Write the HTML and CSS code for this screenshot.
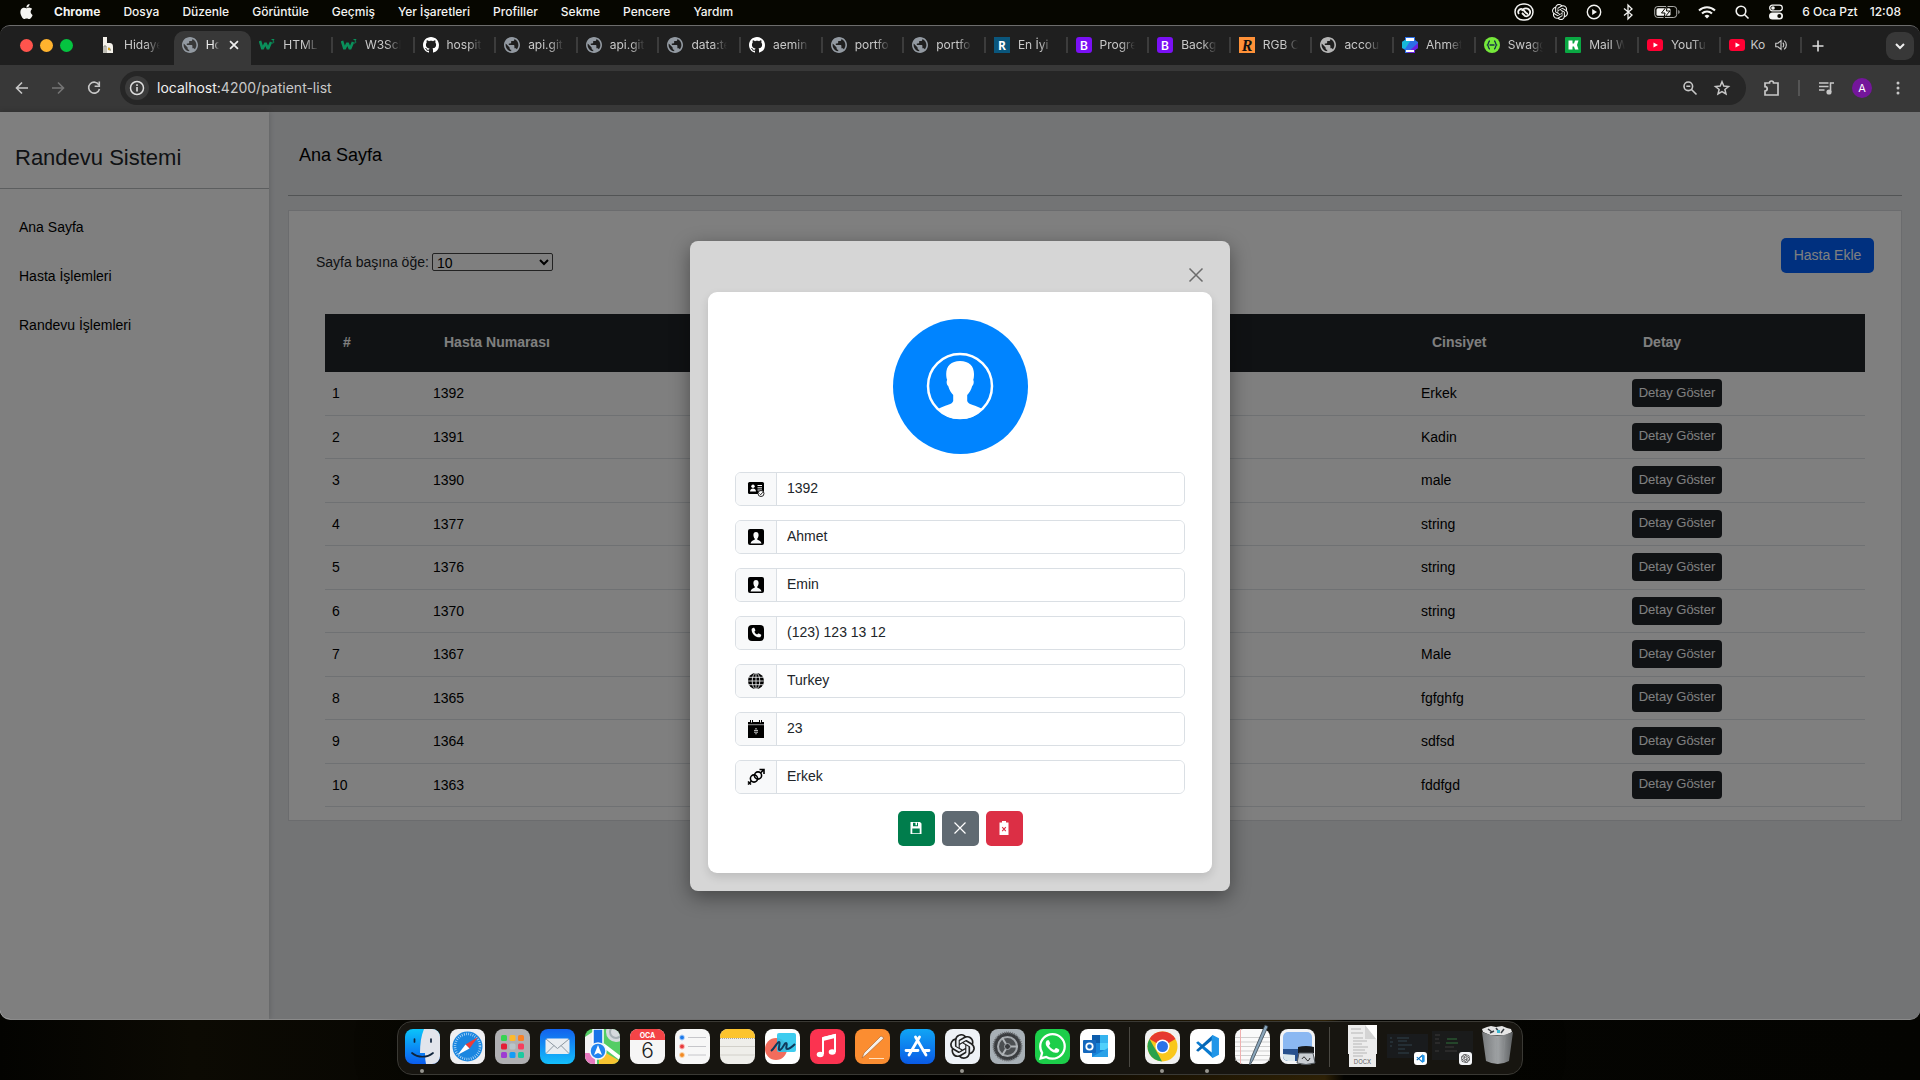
FILE: index.html
```html
<!DOCTYPE html>
<html lang="tr">
<head>
<meta charset="utf-8">
<title>Hasta Listesi</title>
<link rel="stylesheet" href="styles.css">
</head>
<body>
<svg class="sprite" aria-hidden="true">
  <symbol id="globe" viewBox="2 2 20 20"><path fill="currentColor" d="M12 2C6.48 2 2 6.48 2 12s4.48 10 10 10 10-4.48 10-10S17.52 2 12 2zm-1 17.93c-3.95-.49-7-3.85-7-7.93 0-.62.08-1.21.21-1.79L9 15v1c0 1.1.9 2 2 2v1.93zm6.9-2.54c-.26-.81-1-1.39-1.9-1.39h-1v-3c0-.55-.45-1-1-1H8v-2h2c.55 0 1-.45 1-1V7h2c1.1 0 2-.9 2-2v-.41c2.93 1.19 5 4.06 5 7.41 0 2.08-.8 3.97-2.1 5.39z"/></symbol>
  <symbol id="github" viewBox="0 0 16 16"><path fill="#fff" d="M8 0C3.58 0 0 3.58 0 8c0 3.54 2.29 6.53 5.47 7.59.4.07.55-.17.55-.38 0-.19-.01-.82-.01-1.49-2.01.37-2.53-.49-2.69-.94-.09-.23-.48-.94-.82-1.13-.28-.15-.68-.52-.01-.53.63-.01 1.08.58 1.23.82.72 1.21 1.87.87 2.33.66.07-.52.28-.87.51-1.07-1.78-.2-3.64-.89-3.64-3.95 0-.87.31-1.59.82-2.15-.08-.2-.36-1.02.08-2.12 0 0 .67-.21 2.2.82.64-.18 1.32-.27 2-.27s1.36.09 2 .27c1.53-1.04 2.2-.82 2.2-.82.44 1.1.16 1.92.08 2.12.51.56.82 1.27.82 2.15 0 3.07-1.87 3.75-3.65 3.95.29.25.54.73.54 1.48 0 1.07-.01 1.93-.01 2.2 0 .21.15.46.55.38A8.01 8.01 0 0 0 16 8c0-4.42-3.58-8-8-8"/></symbol>
  <symbol id="w3" viewBox="0 0 16 16"><path d="M1 4l2.500 8L6.500 6l2.500 6L12 5" fill="none" stroke="#0a8f5a" stroke-width="2.600" stroke-linejoin="bevel"/><path d="M12.500 2.500H15l-1.200 1.600c1.600 0 1.600 2.200-.8 1.900" fill="none" stroke="#0a8f5a"/></symbol>
  <symbol id="boot" viewBox="0 0 16 16"><rect width="16" height="16" rx="3" fill="#7a10f5"/><text x="8" y="12.500" font-size="12" font-weight="600" font-family="Inter, sans-serif" text-anchor="middle" fill="#fff">B</text></symbol>
  <symbol id="youtube" viewBox="0 0 16 16"><rect y="2" width="16" height="12" rx="3" fill="#ff0033"/><path d="M6.500 5.500v5L11 8z" fill="#fff"/></symbol>
  <symbol id="openai" viewBox="0 0 24 24"><path fill="currentColor" d="M22.2819 9.8211a5.9847 5.9847 0 0 0-.5157-4.9108 6.0462 6.0462 0 0 0-6.5098-2.9A6.0651 6.0651 0 0 0 4.9807 4.1818a5.9847 5.9847 0 0 0-3.9977 2.9 6.0462 6.0462 0 0 0 .7427 7.0966 5.98 5.98 0 0 0 .511 4.9107 6.051 6.051 0 0 0 6.5146 2.9001A5.9847 5.9847 0 0 0 13.2599 24a6.0557 6.0557 0 0 0 5.7718-4.2058 5.9894 5.9894 0 0 0 3.9977-2.9001 6.0557 6.0557 0 0 0-.7475-7.0729zm-9.022 12.6081a4.4755 4.4755 0 0 1-2.8764-1.0408l.1419-.0804 4.7783-2.7582a.7948.7948 0 0 0 .3927-.6813v-6.7369l2.02 1.1686a.071.071 0 0 1 .038.052v5.5826a4.504 4.504 0 0 1-4.4945 4.4944zm-9.6607-4.1254a4.4708 4.4708 0 0 1-.5346-3.0137l.142.0852 4.783 2.7582a.7712.7712 0 0 0 .7806 0l5.8428-3.3685v2.3324a.0804.0804 0 0 1-.0332.0615L9.74 19.9502a4.4992 4.4992 0 0 1-6.1408-1.6464zM2.3408 7.8956a4.485 4.485 0 0 1 2.3655-1.9728V11.6a.7664.7664 0 0 0 .3879.6765l5.8144 3.3543-2.0201 1.1685a.0757.0757 0 0 1-.071 0l-4.8303-2.7865A4.504 4.504 0 0 1 2.3408 7.872zm16.5963 3.8558L13.1038 8.364 15.1192 7.2a.0757.0757 0 0 1 .071 0l4.8303 2.7913a4.4944 4.4944 0 0 1-.6765 8.1042v-5.6772a.79.79 0 0 0-.407-.667zm2.0107-3.0231l-.142-.0852-4.7735-2.7818a.7759.7759 0 0 0-.7854 0L9.409 9.2297V6.8974a.0662.0662 0 0 1 .0284-.0615l4.8303-2.7866a4.4992 4.4992 0 0 1 6.6802 4.66zM8.3065 12.863l-2.02-1.1638a.0804.0804 0 0 1-.038-.0567V6.0742a4.4992 4.4992 0 0 1 7.3757-3.4537l-.142.0805L8.704 5.459a.7948.7948 0 0 0-.3927.6813zm1.0976-2.3654l2.602-1.4998 2.6069 1.4998v2.9994l-2.5974 1.4997-2.6067-1.4997Z"/></symbol>
  <symbol id="vscode" viewBox="0 0 24 24"><path fill="#0a7bd0" d="M1 8.500L3 7l14.500 12L17 23z"/><path fill="#0667b5" d="M1 15.500L3 17 17.500 5 17 1z"/><path fill="#2196e8" d="M17 1l6 3v16l-6 3-1-1V2z"/></symbol>
  <symbol id="person-box" viewBox="0 0 16 16"><rect width="16" height="16" rx="2" fill="#000"/><path fill="#f8f9fa" d="M8 3c1.700 0 2.600 1.200 2.600 2.900 0 1.500-.6 2.900-1.300 3.600v1.300c2 .6 3.700 1.400 4.200 3.700h-11c.5-2.300 2.200-3.100 4.200-3.700V9.500C6 8.800 5.400 7.400 5.400 5.900 5.400 4.200 6.300 3 8 3z"/></symbol>
</svg>

<header class="menubar">
  <button class="menu-apple" aria-label="Apple"><svg width="15" height="15" viewBox="0 0 16 16"><path fill="currentColor" d="M11.182.008C11.148-.03 9.923.023 8.857 1.18c-1.066 1.156-.902 2.482-.878 2.516s1.520.087 2.475-1.258.762-2.391.728-2.430m3.314 11.733c-.048-.096-2.325-1.234-2.113-3.422s1.675-2.789 1.698-2.854-.597-.79-1.254-1.157a3.700 3.700 0 0 0-1.563-.434c-.108-.003-.483-.095-1.254.116-.508.139-1.653.589-1.968.607-.316.018-1.256-.522-2.267-.665-.647-.125-1.333.131-1.824.328-.49.196-1.422.754-2.074 2.237-.652 1.482-.311 3.830-.067 4.560s.625 1.924 1.273 2.796c.576.984 1.340 1.667 1.659 1.899s1.219.386 1.843.067c.502-.308 1.408-.485 1.766-.472.357.013 1.061.154 1.782.539.571.197 1.111.115 1.652-.105.541-.221 1.324-1.059 2.238-2.758q.520-1.185.473-1.282"/></svg></button>
  <nav class="menus">
    <button class="app-name">Chrome</button><button>Dosya</button><button>Düzenle</button><button>Görüntüle</button><button>Geçmiş</button><button>Yer İşaretleri</button><button>Profiller</button><button>Sekme</button><button>Pencere</button><button>Yardım</button>
  </nav>
  <div class="status">
    <svg width="20" height="18" viewBox="0 0 20 18" fill="none" stroke="currentColor"><rect x="1" y="1" width="18" height="16" rx="8" stroke-width="1.500"/><path d="M5 11a3 3 0 0 1 2-5c3-1 4 5 7 5M8 8c1-3 6-4 8 0 1 4-3 6-5 5L8 10" stroke-width="1.800"/></svg>
    <svg width="16" height="16"><use href="#openai"/></svg>
    <svg width="16" height="16" viewBox="0 0 16 16"><circle cx="8" cy="8" r="6.700" fill="none" stroke="currentColor" stroke-width="1.400"/><path d="M6.200 5v6L11 8z" fill="currentColor"/></svg>
    <svg width="16" height="16" viewBox="0 0 16 16" fill="none" stroke="currentColor" stroke-width="1.300"><path d="M4 4.500l8 6.500-4 4V1l4 4-8 6.500"/></svg>
    <svg width="26" height="14" viewBox="0 0 26 14"><rect x=".7" y="1.500" width="22" height="11" rx="3" fill="none" stroke="currentColor" opacity=".7"/><path d="M24.500 5v4c1.300-.5 1.300-3.500 0-4" fill="currentColor"/><rect x="2.500" y="3.200" width="14" height="7.600" rx="1.500" fill="currentColor"/><path d="M13 1L7.500 8H11l-1 5 6-7h-3.500z" fill="currentColor" stroke="#060600"/></svg>
    <svg width="18" height="14" viewBox="0 0 18 14" fill="none" stroke="currentColor" stroke-width="2"><path d="M1 5.500a11.500 11.500 0 0 1 16 0M4 8.500a7 7 0 0 1 10 0"/><path d="M6.500 11a3.500 3.500 0 0 1 5 0L9 13.500z" fill="currentColor" stroke="none"/></svg>
    <svg width="16" height="16" viewBox="0 0 16 16" fill="none" stroke="currentColor" stroke-width="1.600"><circle cx="7" cy="7" r="4.800"/><path d="M10.500 10.500l4 4"/></svg>
    <svg width="16" height="16" viewBox="0 0 16 16"><rect x="1.700" y="1.200" width="12.600" height="5.600" rx="2.800" fill="none" stroke="currentColor" stroke-width="1.300"/><circle cx="5" cy="4" r="1.800" fill="currentColor"/><rect x="1" y="8.500" width="14" height="7" rx="3.500" fill="currentColor"/><circle cx="11.300" cy="12" r="2" fill="#060600"/></svg>
    <span class="clock"><span>6 Oca Pzt</span><time>12:08</time></span>
  </div>
</header>

<div class="window">
  <div class="tabstrip">
    <div class="lights"><i class="light red"></i><i class="light amber"></i><i class="light green"></i></div>
    <div class="tabs">
      <button class="tab plain"><svg viewBox="0 0 16 16"><path d="M3 0h4v6h2c3 0 4 1 4 4v6H3z" fill="#f4f1ea"/><path d="M4 16V9h2v7M8 11c2 0 3 1 2 3" fill="none" stroke="#8a8a80"/><circle cx="9" cy="12" r="1.200" fill="#d9a520"/></svg><span>Hidaye</span></button>
      <button class="tab active"><svg class="grey"><use href="#globe"/></svg><span>Ho</span><svg class="tab-x" viewBox="0 0 16 16"><path d="M3.500 3.500l9 9m0-9l-9 9" stroke="#eee" stroke-width="2"/></svg></button>
      <button class="tab"><svg><use href="#w3"/></svg><span>HTML</span></button>
      <button class="tab"><svg><use href="#w3"/></svg><span>W3Scl</span></button>
      <button class="tab"><svg><use href="#github"/></svg><span>hospit</span></button>
      <button class="tab"><svg class="grey"><use href="#globe"/></svg><span>api.git</span></button>
      <button class="tab"><svg class="grey"><use href="#globe"/></svg><span>api.git</span></button>
      <button class="tab"><svg class="grey"><use href="#globe"/></svg><span>data:te</span></button>
      <button class="tab"><svg><use href="#github"/></svg><span>aemin</span></button>
      <button class="tab"><svg class="grey"><use href="#globe"/></svg><span>portfo</span></button>
      <button class="tab"><svg class="grey"><use href="#globe"/></svg><span>portfo</span></button>
      <button class="tab"><svg viewBox="0 0 16 16"><rect width="16" height="16" fill="#0a567c"/><text x="8" y="12.500" font-size="12" font-weight="700" font-family="Open Sans, sans-serif" text-anchor="middle" fill="#fff">R</text></svg><span>En İyi</span></button>
      <button class="tab"><svg><use href="#boot"/></svg><span>Progre</span></button>
      <button class="tab"><svg><use href="#boot"/></svg><span>Backg</span></button>
      <button class="tab"><svg viewBox="0 0 16 16"><rect width="16" height="16" fill="#ff9138"/><text x="8" y="14" font-size="16" font-weight="700" font-style="italic" font-family="Liberation Serif, serif" text-anchor="middle" fill="#111">R</text></svg><span>RGB C</span></button>
      <button class="tab"><svg class="light-grey"><use href="#globe"/></svg><span>accou</span></button>
      <button class="tab"><svg viewBox="0 0 16 16"><path d="M3 0h10v3l3 2v6l-3 2v3H3v-3l-3-2V5l3-2z" fill="#2b6fe8"/><path d="M0 5l3-2h6l-6 9-3-1z" fill="#16b8d8"/><path d="M16 6v5l-3 2v3H5z" fill="#6a20e0"/><path d="M4 1h8v3H4zM4 13h8v2H4z" fill="#fff"/></svg><span>Ahmet</span></button>
      <button class="tab"><svg viewBox="0 0 16 16"><circle cx="8" cy="8" r="8" fill="#76e83a"/><path d="M6 4c-2 0-1 3-2.500 4C5 9 4 12 6 12M10 4c2 0 1 3 2.500 4C11 9 12 12 10 12M5.500 8h5" fill="none" stroke="#173647" stroke-width="1.400"/></svg><span>Swagg</span></button>
      <button class="tab"><svg viewBox="0 0 16 16"><rect width="16" height="16" rx="1" fill="#0aa843"/><path d="M3.500 3.500h4v3h1.500l1-3h3.500L12 8l1.500 4.500H10l-1-3H7.500v3h-4z" fill="#fff"/></svg><span>Mail W</span></button>
      <button class="tab"><svg><use href="#youtube"/></svg><span>YouTu</span></button>
      <button class="tab last"><svg><use href="#youtube"/></svg><span class="short">Ko</span><svg class="sound" viewBox="0 0 16 16" fill="none" stroke="#ccc" stroke-width="1.300"><path d="M2 6v4h2.500L8 13V3L4.500 6zM10 5.500c1.500 1 1.500 4 0 5M11.500 3c3.500 2 3.500 8 0 10"/></svg></button>
    </div>
    <button class="new-tab" aria-label="Yeni sekme"><svg width="14" height="14" viewBox="0 0 14 14"><path d="M7 1.500v11M1.500 7h11" stroke="#ddd" stroke-width="1.600"/></svg></button>
    <button class="tab-search" aria-label="Sekme ara"><svg width="12" height="12" viewBox="0 0 12 12"><path d="M2 4l4 4 4-4" fill="none" stroke="#eee" stroke-width="2"/></svg></button>
  </div>

  <div class="toolbar">
    <button class="tool" aria-label="Geri"><svg width="16" height="16" viewBox="0 0 16 16" fill="none" stroke="currentColor" stroke-width="1.600"><path d="M14 8H3M8 2.500L2.500 8 8 13.500"/></svg></button>
    <button class="tool off" aria-label="İleri"><svg width="16" height="16" viewBox="0 0 16 16" fill="none" stroke="currentColor" stroke-width="1.600"><path d="M2 8h11M8 2.500L13.500 8 8 13.500"/></svg></button>
    <button class="tool" aria-label="Yenile"><svg width="16" height="16" viewBox="0 0 16 16" fill="none" stroke="currentColor" stroke-width="1.600"><path d="M13 5A5.500 5.500 0 1 0 13.500 9"/><path d="M13.300 1.500v4.700H8.600" /></svg></button>
    <div class="omnibox">
      <span class="site-info"><svg width="16" height="16" viewBox="0 0 16 16"><circle cx="8" cy="8" r="6.500" fill="none" stroke="#ddd" stroke-width="1.500"/><path d="M8 7v4.500M8 4.300v1.600" stroke="#ddd" stroke-width="1.600"/></svg></span>
      <span class="url"><b>localhost:</b>4200/patient-list</span>
      <button class="omni-icon" aria-label="Yakınlaştır"><svg width="16" height="16" viewBox="0 0 16 16" fill="none" stroke="currentColor" stroke-width="1.600"><circle cx="6.300" cy="6.300" r="4.300"/><path d="M9.500 9.500l5 5M4.300 6.300h4"/></svg></button>
      <button class="omni-icon" aria-label="Yer işareti"><svg width="16" height="16" viewBox="0 0 16 16" fill="none" stroke="currentColor" stroke-width="1.500"><path d="M8 1.800l1.800 4.300 4.700.4-3.600 3 1.100 4.500L8 11.600 4 14l1.100-4.500-3.600-3 4.700-.4z"/></svg></button>
    </div>
    <button class="tool" aria-label="Uzantılar"><svg width="18" height="18" viewBox="0 0 18 18" fill="none" stroke="currentColor" stroke-width="1.700"><path d="M2 4h4.500a2 2 0 0 1 4 0H15v12H2v-4a2.200 2.200 0 0 0 0-4.400z"/></svg></button>
    <i class="tool-rule"></i>
    <button class="tool" aria-label="Medya"><svg width="18" height="16" viewBox="0 0 18 16" fill="none" stroke="currentColor" stroke-width="1.600"><path d="M2 3h9.500M2 6.500h9.500M2 10h5.500M13.500 12V3H17"/><circle cx="12" cy="12" r="1.800" fill="currentColor"/></svg></button>
    <button class="tool" aria-label="Profil"><span class="profile">A</span></button>
    <button class="tool" aria-label="Menü"><svg width="16" height="16" viewBox="0 0 16 16" fill="currentColor"><circle cx="8" cy="3" r="1.500"/><circle cx="8" cy="8" r="1.500"/><circle cx="8" cy="13" r="1.500"/></svg></button>
  </div>

  <div class="page">
    <aside class="sidebar">
      <h2>Randevu Sistemi</h2>
      <nav><a href="#">Ana Sayfa</a><a href="#">Hasta İşlemleri</a><a href="#">Randevu İşlemleri</a></nav>
    </aside>
    <main class="main">
      <div class="page-head"><h1>Ana Sayfa</h1></div>
      <section class="card">
        <div class="list-tools">
          <div class="per-page"><label for="per-page">Sayfa başına öğe:</label><select id="per-page"><option>10</option></select></div>
          <button class="add">Hasta Ekle</button>
        </div>
        <table class="patients">
          <colgroup><col class="c-no"><col><col class="c-sex"><col class="c-detail"></colgroup>
          <thead><tr><th>#</th><th>Hasta Numarası</th><th>Cinsiyet</th><th>Detay</th></tr></thead>
          <tbody>
            <tr><td>1</td><td>1392</td><td>Erkek</td><td><button class="detail">Detay Göster</button></td></tr>
            <tr><td>2</td><td>1391</td><td>Kadin</td><td><button class="detail">Detay Göster</button></td></tr>
            <tr><td>3</td><td>1390</td><td>male</td><td><button class="detail">Detay Göster</button></td></tr>
            <tr><td>4</td><td>1377</td><td>string</td><td><button class="detail">Detay Göster</button></td></tr>
            <tr><td>5</td><td>1376</td><td>string</td><td><button class="detail">Detay Göster</button></td></tr>
            <tr><td>6</td><td>1370</td><td>string</td><td><button class="detail">Detay Göster</button></td></tr>
            <tr><td>7</td><td>1367</td><td>Male</td><td><button class="detail">Detay Göster</button></td></tr>
            <tr><td>8</td><td>1365</td><td>fgfghfg</td><td><button class="detail">Detay Göster</button></td></tr>
            <tr><td>9</td><td>1364</td><td>sdfsd</td><td><button class="detail">Detay Göster</button></td></tr>
            <tr><td>10</td><td>1363</td><td>fddfgd</td><td><button class="detail">Detay Göster</button></td></tr>
          </tbody>
        </table>
      </section>
    </main>

    <div class="backdrop">
      <div class="modal" role="dialog" aria-modal="true">
        <div class="modal-head"><button class="close" aria-label="Kapat"><svg width="16" height="16" viewBox="0 0 16 16"><path d="M1.500 1.500l13 13m0-13l-13 13" stroke="#6b6b6b" stroke-width="1.500"/></svg></button></div>
        <form class="patient">
          <svg class="avatar" viewBox="0 0 135 135"><circle cx="67.500" cy="67.500" r="67.500" fill="#0084ff"/><circle cx="67" cy="67" r="32" fill="none" stroke="#fff" stroke-width="2.500"/><path fill="#fff" d="M67 42c9 0 14 5 14 13 0 3-.3 5-.8 6 1 1 .6 5-1 6-1 4-3 7-5 9v6c1 4 9 4 15 8-5 7-13 10-22 10s-17-3-22-10c6-4 14-4 15-8v-6c-2-2-4-5-5-9-1.600-1-2-5-1-6-.5-1-1-3-1-6 0-8 5-13 13.800-13z"/></svg>
          <div class="fields">
            <div class="field"><label for="f-no" aria-label="Hasta numarası"><svg width="18" height="18" viewBox="0 0 18 18"><rect x="1" y="2" width="16" height="12" rx="1.500"/><circle cx="6" cy="6.200" r="1.700" fill="#fff"/><path d="M3 11.500c0-4 6-4 6 0z" fill="#fff"/><path d="M10.500 5.500H15M10.500 7.800H15M10.500 10H15" stroke="#fff"/><circle cx="14" cy="13.500" r="3" fill="#fff" stroke="#222"/><path d="M12.500 13.500l1.200 1.200 2-2.400" stroke="#222" fill="none"/></svg></label><input id="f-no" value="1392"></div>
            <div class="field"><label for="f-ad" aria-label="Ad"><svg width="16" height="16"><use href="#person-box"/></svg></label><input id="f-ad" value="Ahmet"></div>
            <div class="field"><label for="f-soyad" aria-label="Soyad"><svg width="16" height="16"><use href="#person-box"/></svg></label><input id="f-soyad" value="Emin"></div>
            <div class="field"><label for="f-tel" aria-label="Telefon"><svg width="16" height="16" viewBox="0 0 16 16"><rect width="16" height="16" rx="4"/><path fill="#f8f9fa" d="M4.300 3.300l1.200-.6c.4-.1.700 0 .9.400l.9 1.900c.1.400 0 .7-.2 1l-.8.8c.6 1.200 1.500 2.200 2.800 2.800l.8-.8c.3-.3.600-.3 1-.2l1.900.9c.4.200.5.500.4.900l-.6 1.300c-.2.300-.5.600-1 .6C7.500 12.500 3.600 8.500 3.600 4.400c0-.5.300-.9.700-1.100z"/></svg></label><input id="f-tel" value="(123) 123 13 12"></div>
            <div class="field"><label for="f-ulke" aria-label="Ülke"><svg width="16" height="16" viewBox="0 0 16 16"><circle cx="8" cy="8" r="8"/><g fill="none" stroke="#f8f9fa" stroke-width=".8"><ellipse cx="8" cy="8" rx="3.800" ry="8"/><path d="M8 0v16M0 8h16M1 4.300h14M1 11.700h14"/></g></svg></label><input id="f-ulke" value="Turkey"></div>
            <div class="field"><label for="f-yas" aria-label="Yaş"><svg width="16" height="18" viewBox="0 0 16 18"><path d="M0 2h2V0h3v2h6V0h3v2h2v16H0z"/><path d="M0 4.700h16" stroke="#777" stroke-width="1.200"/><path d="M3.500 0v2.500M12.500 0v2.500" stroke="#fff"/><path d="M6 10.400h4M6 12.200h4" stroke="#fff" stroke-width=".8"/><path d="M8 8l1.200 1.200H6.800zM8 14.600l1.200-1.200H6.800z" fill="#fff"/></svg></label><input id="f-yas" value="23"></div>
            <div class="field"><label for="f-cins" aria-label="Cinsiyet"><svg width="18" height="18" viewBox="0 0 18 18" fill="none" stroke="#000" stroke-width="1.600"><circle cx="7" cy="10.500" r="3.600"/><circle cx="11" cy="7.500" r="3.600"/><path d="M13.500 5L16.500 1.800M12.500 1.500H17V6M4.500 13L1 16.500M1 13.500l3 3"/></svg></label><input id="f-cins" value="Erkek"></div>
          </div>
          <div class="actions">
            <button type="button" class="act save" aria-label="Kaydet"><svg width="14" height="14" viewBox="0 0 14 14"><path fill="#fff" fill-rule="evenodd" d="M1.500 1h9.500L12.500 2.500V13h-11zM4 1.800v3.400h5V1.800H8v2.400H6.500V1.800zM3.300 7.500v4.700h7.400V7.500z"/></svg></button>
            <button type="button" class="act cancel" aria-label="Vazgeç"><svg width="14" height="14" viewBox="0 0 14 14"><path d="M1.500 1.500l11 11m0-11l-11 11" stroke="#fff" stroke-width="1.200"/></svg></button>
            <button type="button" class="act delete" aria-label="Sil"><svg width="14" height="14" viewBox="0 0 14 14"><path fill="#fff" d="M2.500 1.500H5V0h4v1.500h2.500V14h-9z"/><path d="M5.200 6.200l3.600 4m0-4l-3.600 4" stroke="#dc2f45" stroke-width="1.100"/></svg></button>
          </div>
        </form>
      </div>
    </div>
  </div>
</div>

<footer class="desktop">
  <div class="dock">
    <div class="app running"><svg viewBox="0 0 35 35"><defs><linearGradient id="gf" x2="0" y2="1"><stop stop-color="#0bc4fa"/><stop offset="1" stop-color="#0b5df0"/></linearGradient></defs><rect width="35" height="35" rx="8" fill="url(#gf)"/><path d="M19 0h8a8 8 0 0 1 8 8v19a8 8 0 0 1-8 8h-6c-1-5-1-8-1-11h-5c0-9 1-17 4-24z" fill="#e2e5ec"/><path d="M9.500 10v3M26 10v3M7 24c6 5 15 5 21 0" stroke="#10243c" stroke-width="1.700" stroke-linecap="round" fill="none"/></svg></div>
    <div class="app"><svg viewBox="0 0 35 35"><rect width="35" height="35" rx="8" fill="#f0f0f2"/><circle cx="17.500" cy="17.500" r="15" fill="#1a86e0"/><circle cx="17.500" cy="17.500" r="12.500" fill="none" stroke="#c8e4fa" stroke-width="2.500" stroke-dasharray=".7 1.500"/><path d="M28 8L19.500 19.500l-4-4z" fill="#ef3b36"/><path d="M7.500 26l8-10.500 4 4z" fill="#fff"/></svg></div>
    <div class="app"><svg viewBox="0 0 35 35"><rect width="35" height="35" rx="8" fill="#b0b0b2"/><g><rect x="6" y="6" width="6" height="6" rx="1.500" fill="#35d452"/><rect x="14.500" y="6" width="6" height="6" rx="1.500" fill="#fdb92c"/><rect x="23" y="6" width="6" height="6" rx="1.500" fill="#f98126"/><rect x="6" y="14.500" width="6" height="6" rx="1.500" fill="#e51e35"/><rect x="14.500" y="14.500" width="6" height="6" rx="1.500" fill="#b9c5ca"/><rect x="23" y="14.500" width="6" height="6" rx="1.500" fill="#f73e5d"/><rect x="6" y="23" width="6" height="6" rx="1.500" fill="#9e3bd2"/><rect x="14.500" y="23" width="6" height="6" rx="1.500" fill="#139cf6"/><rect x="23" y="23" width="6" height="6" rx="1.500" fill="#1ccaa0"/></g></svg></div>
    <div class="app"><svg viewBox="0 0 35 35"><defs><linearGradient id="gm" x2="0" y2="1"><stop stop-color="#1262ee"/><stop offset="1" stop-color="#14bffb"/></linearGradient></defs><rect width="35" height="35" rx="8" fill="url(#gm)"/><rect x="5.500" y="9.500" width="24" height="15.500" rx="2" fill="#e9edf1"/><path d="M6 10l11.500 9.500L29 10M6 24.500l8-8M29 24.500l-8-8" fill="none" stroke="#8d98a2"/></svg></div>
    <div class="app"><svg viewBox="0 0 35 35"><defs><clipPath id="cm"><rect width="35" height="35" rx="8"/></clipPath></defs><g clip-path="url(#cm)"><path fill="#54cd65" d="M0 0h35v35H0z"/><path d="M0 8l12-8v35H0z" fill="#f2f2f2"/><path d="M0 24h10v11H0z" fill="#e678bd"/><circle cx="31" cy="3" r="10" fill="#d5dadd"/><circle cx="31" cy="3" r="6" fill="none" stroke="#a5b0b4" stroke-width="2"/><path d="M14 20l21 12v3H14z" fill="#f8c431"/><path d="M18 16l17 13" stroke="#fff" stroke-width="4"/><path d="M8 0h10v20H8z" fill="#1a74e8" stroke="#fff" stroke-width="1.500"/></g><circle cx="13" cy="22" r="8" fill="#2184f0" stroke="#f4f8fb" stroke-width="1.500"/><path d="M13 16l4 10-4-2-4 2z" fill="#fff"/></svg></div>
    <div class="app"><svg viewBox="0 0 35 35"><rect width="35" height="35" rx="8" fill="#f6f6f6"/><path d="M0 11V8a8 8 0 0 1 8-8h19a8 8 0 0 1 8 8v3z" fill="#f44447"/><text x="17.500" y="8.500" font-size="7" font-weight="700" font-family="Inter, sans-serif" text-anchor="middle" fill="#fff">OCA</text><text x="17.500" y="29" font-size="21" font-weight="300" font-family="Inter, sans-serif" text-anchor="middle" fill="#222">6</text></svg></div>
    <div class="app"><svg viewBox="0 0 35 35"><rect width="35" height="35" rx="8" fill="#f7f7f7"/><g fill="none"><circle cx="7" cy="8.500" r="2.500" stroke="#a8ccf8"/><circle cx="7" cy="17.500" r="2.500" stroke="#f7b0ae"/><circle cx="7" cy="26" r="2.500" stroke="#fbd0a0"/></g><circle cx="7" cy="8.500" r="2" fill="#1a78ea"/><circle cx="7" cy="17.500" r="2" fill="#e93a3c"/><circle cx="7" cy="26" r="2" fill="#f28a22"/><path d="M13 8.500h18M13 17.500h18M13 26h18" stroke="#c6c6ca"/></svg></div>
    <div class="app"><svg viewBox="0 0 35 35"><rect width="35" height="35" rx="8" fill="#efeeea"/><path d="M0 9V8a8 8 0 0 1 8-8h19a8 8 0 0 1 8 8v1z" fill="#fcc42e"/><path d="M0 9.500h35" stroke="#a9a59a" stroke-dasharray="1 1"/><path d="M0 17.500h35M0 26h35" stroke="#d2d0ca"/></svg></div>
    <div class="app"><svg viewBox="0 0 35 35"><rect width="35" height="35" rx="8" fill="#fff"/><circle cx="11" cy="20" r="11" fill="#f36c5c"/><rect x="12" y="4" width="19" height="19" rx="2" fill="#29c6ed" opacity=".9"/><path d="M6 22c4-3 6-9 8-9s-2 9 1 8 4-7 6-7-1 6 1 6 4-1 8-5" fill="none" stroke="#103a5c" stroke-width="2"/></svg></div>
    <div class="app"><svg viewBox="0 0 35 35"><rect width="35" height="35" rx="8" fill="#fb3350"/><path d="M13 25V9l12-3v17" fill="none" stroke="#fff" stroke-width="2"/><path d="M13 8l12-3v4l-12 3z" fill="#fff"/><ellipse cx="10.200" cy="25.500" rx="3.500" ry="2.800" fill="#fff"/><ellipse cx="22.200" cy="23" rx="3.500" ry="2.800" fill="#fff"/></svg></div>
    <div class="app"><svg viewBox="0 0 35 35"><rect width="35" height="35" rx="8" fill="#fb8d31"/><path d="M14 29.500h15" stroke="#ffe0bd"/><path d="M26 7l3 2-18 17-4 3 2-5z" fill="#f5f0ea" stroke="#a5602a" stroke-width=".6"/></svg></div>
    <div class="app"><svg viewBox="0 0 35 35"><defs><linearGradient id="ga" x2="0" y2="1"><stop stop-color="#10a5f5"/><stop offset="1" stop-color="#0a5ae6"/></linearGradient></defs><rect width="35" height="35" rx="8" fill="url(#ga)"/><path d="M19.500 8L9 26M15.500 8L26 26M6 21.500h12M23 21.500h6" stroke="#fff" stroke-width="2.800" stroke-linecap="round"/></svg></div>
    <div class="app running"><svg viewBox="0 0 35 35"><rect width="35" height="35" rx="8" fill="#eef2f7"/><use href="#openai" x="5" y="5" width="25" height="25" color="#222"/></svg></div>
    <div class="app"><svg viewBox="0 0 35 35"><rect width="35" height="35" rx="8" fill="#a8b0b6"/><circle cx="17.500" cy="17.500" r="14" fill="#3a3c3f"/><circle cx="17.500" cy="17.500" r="14" fill="none" stroke="#6d7074" stroke-width="2" stroke-dasharray="1 1"/><circle cx="17.500" cy="17.500" r="9.500" fill="#4c4f52" stroke="#a4a8ac" stroke-width="2"/><path d="M17.500 17.500H28M17.500 17.500L12 8.500M17.500 17.500L12 26.500" stroke="#b0b4b8" stroke-width="2"/><circle cx="17.500" cy="17.500" r="3" fill="#3a3c3f" stroke="#a4a8ac"/></svg></div>
    <div class="app"><svg viewBox="0 0 35 35"><rect width="35" height="35" rx="8" fill="#1cce4a"/><svg x="4" y="4" width="27" height="27" viewBox="0 0 16 16"><path fill="#fff" d="M13.601 2.326A7.850 7.850 0 0 0 7.994 0C3.627 0 .068 3.558.064 7.926c0 1.399.366 2.760 1.057 3.965L0 16l4.204-1.102a7.900 7.900 0 0 0 3.790.965h.004c4.368 0 7.926-3.558 7.930-7.930A7.900 7.900 0 0 0 13.600 2.326zM7.994 14.521a6.600 6.600 0 0 1-3.356-.92l-.24-.144-2.494.654.666-2.433-.156-.251a6.560 6.560 0 0 1-1.007-3.505c0-3.626 2.957-6.584 6.591-6.584a6.560 6.560 0 0 1 4.660 1.931 6.560 6.560 0 0 1 1.928 4.660c-.004 3.639-2.961 6.592-6.592 6.592m3.615-4.934c-.197-.099-1.170-.578-1.353-.646-.182-.065-.315-.099-.445.099-.133.197-.513.646-.627.775-.114.133-.232.148-.43.05-.197-.1-.836-.308-1.592-.985-.59-.525-.985-1.175-1.103-1.372-.114-.198-.011-.304.088-.403.087-.088.197-.232.296-.346.1-.114.133-.198.198-.33.065-.134.034-.248-.015-.347-.05-.099-.445-1.076-.612-1.470-.16-.389-.323-.335-.445-.34-.114-.007-.247-.007-.38-.007a.73.73 0 0 0-.529.247c-.182.198-.691.677-.691 1.654s.71 1.916.81 2.049c.098.133 1.394 2.132 3.383 2.992.47.205.84.326 1.129.418.475.152.904.129 1.246.08.38-.058 1.171-.48 1.338-.943.164-.464.164-.86.114-.943-.049-.084-.182-.133-.38-.232"/></svg></svg></div>
    <div class="app"><svg viewBox="0 0 35 35"><rect width="35" height="35" rx="8" fill="#fff"/><path d="M12 6h16v22H12z" fill="#1783d8"/><path d="M12 6h8v8h-8z" fill="#0d5cab"/><path d="M20 6h8v8h-8z" fill="#35b4ef"/><path d="M20 14h8v7h-8z" fill="#50d0fb"/><path d="M12 28l16-9v9z" fill="#2aa1e8"/><rect x="3" y="11" width="13" height="13" rx="1" fill="#1468bd"/><circle cx="9.500" cy="17.500" r="3.200" fill="none" stroke="#fff" stroke-width="1.800"/></svg></div>
    <i class="dock-rule"></i>
    <div class="app running"><svg viewBox="0 0 35 35"><rect width="35" height="35" rx="8" fill="#f1f1f1"/><circle cx="17.500" cy="17.500" r="15" fill="#f9c71c"/><path d="M17.500 17.500L4.500 10A15 15 0 0 1 30.500 10z" fill="#e6392f"/><path d="M4.500 10l8.500 15 4 7.500A15 15 0 0 1 4.500 10z" fill="#2ba24c"/><circle cx="17.500" cy="17.500" r="7" fill="#fff"/><circle cx="17.500" cy="17.500" r="5.500" fill="#2a73e8"/></svg></div>
    <div class="app running"><svg viewBox="0 0 35 35"><rect width="35" height="35" rx="8" fill="#fff"/><use href="#vscode" x="5" y="5" width="25" height="25"/></svg></div>
    <div class="app"><svg viewBox="0 0 35 35"><rect width="35" height="35" rx="8" fill="#fafafa"/><path d="M0 8.500h35M0 13h35M0 17.500h35M0 22h35M0 26.500h35M0 31h35" stroke="#cfcfcf"/><path d="M5.500 0v35" stroke="#f0b0b0"/><path d="M30-4l3 1.500L18 31l-3 5-.5-1L16 29z" fill="#8aa6bc" stroke="#39454f" stroke-width=".8"/></svg></div>
    <div class="app"><svg viewBox="0 0 35 35"><rect width="35" height="35" rx="8" fill="#f3f4f6"/><rect x="3" y="3" width="29" height="29" rx="5" fill="#8bb8f2"/><path d="M3 20h29v7a5 5 0 0 1-5 5H8a5 5 0 0 1-5-5z" fill="#27518e"/><path d="M3 25l12 1v6H8a5 5 0 0 1-5-5z" fill="#dce9ee"/><path d="M18 18q8-2 16 0v6H18z" fill="#17191b"/><path d="M19 24h14l2 10q-9 3-18 0z" fill="#c9ced3" stroke="#50565c"/><path d="M22 30q2-4 4 0t4-1" fill="none" stroke="#333"/></svg></div>
    <i class="dock-rule"></i>
    <div class="app"><svg viewBox="0 0 35 35"><path d="M3-4h29v29h-1v13H4V25H3z" fill="#ececec"/><path d="M20-4l12 15V-4z" fill="#fff"/><path d="M20-4v14h11z" fill="#d4d4d4"/><path d="M6 0h10M6 4h12M8 9h10M8 12h14M8 15h9M8 18h15M8 21h12M8 24h14M8 27h10" stroke="#aaa" stroke-width=".8"/><text x="17.500" y="35" font-size="6" font-family="Inter, sans-serif" text-anchor="middle" fill="#666">DOCX</text></svg></div>
    <div class="app"><svg viewBox="0 0 35 35"><rect x="-3" y="5" width="41" height="24" fill="#191b1d"/><path d="M0 9h2M0 13h3M0 17h2M7 9h12M8 12h9M8 16h14M8 20h7M8 24h11" stroke="#30424c"/><rect x="24" y="23" width="13" height="13" rx="3" fill="#fff"/><use href="#vscode" x="26" y="25" width="9" height="9"/></svg></div>
    <div class="app"><svg viewBox="0 0 35 35"><rect x="-3" y="2" width="41" height="29" fill="#1a1b1b"/><path d="M0 6h5M0 10h4M0 14h5M0 22h4M10 18h9M10 22h12" stroke="#3a3a3a"/><path d="M12 10h10M11 14h12" stroke="#24452a" stroke-width="2"/><rect x="24" y="23" width="13" height="13" rx="3" fill="#f4f5f7"/><use href="#openai" x="26" y="25" width="9" height="9" color="#222"/></svg></div>
    <div class="app"><svg viewBox="0 0 35 35"><defs><linearGradient id="gt"><stop stop-color="#777a7c"/><stop offset=".5" stop-color="#a0a3a5"/><stop offset="1" stop-color="#5e6163"/></linearGradient></defs><path d="M3 3l-1-3 5-2 4-1 5 1 6-1 5 2 4 1 1 3-6 3H10z" fill="#e6e6e6"/><path d="M8 0l4 3M16-1l3 4M24 0l-3 4M10 4l4-2" stroke="#3a3f44" stroke-width="1.500"/><path d="M17 1h3v3h-3z" fill="#35b6d0"/><path d="M2 3q15 7 31 0l-4 29q-11 6-23 0z" fill="url(#gt)"/><path d="M10 8l2 24M17 9v26M25 8l-2 24" stroke="#8e9193" opacity=".5"/></svg></div>
  </div>
</footer>
</body>
</html>
```
FILE: styles.css
```css
* { box-sizing: border-box; }
body {
  margin: 0;
  min-height: 100vh;
  display: flex;
  flex-direction: column;
  background: #050501;
  font-family: "Liberation Sans", Arial, sans-serif;
  font-size: 14px;
  overflow: hidden;
}
button { border: 0; padding: 0; background: none; color: inherit; font: inherit; }
svg { display: block; overflow: visible; }
.sprite { position: absolute; width: 0; height: 0; }

/* system menu bar */
.menubar {
  display: flex;
  align-items: center;
  height: 25px;
  padding: 0 19px 2px;
  background: #060600;
  color: #f4f4f2;
  font: 500 12px/22px Inter, sans-serif;
}
.menus { display: flex; gap: 23px; margin-left: 20px; }
.menus .app-name { font-weight: 700; }
.status { display: flex; align-items: center; gap: 18px; margin-left: auto; }
.clock { display: flex; gap: 12px; }

/* browser window */
.window {
  flex: 1;
  display: flex;
  flex-direction: column;
  border-top: 1px solid #6c6c6c;
  border-bottom: 1px solid #8a8a8a;
  border-radius: 10px;
  overflow: hidden;
  background: #383838;
}
.tabstrip {
  display: flex;
  align-items: center;
  height: 39px;
  padding: 0 6px 0 20px;
  background: #1f1f1f;
  color: #c9c9c9;
  font: 12px/16px Inter, sans-serif;
}
.lights { flex: none; display: flex; gap: 7px; width: 72px; }
.light { width: 13px; height: 13px; border-radius: 50%; }
.red { background: #ff544d; }
.amber { background: #ffb32e; }
.green { background: #05c340; }
.tabs { flex: 1; min-width: 0; display: flex; height: 100%; align-items: flex-end; }
.tab {
  flex: 1 1 0;
  min-width: 0;
  display: flex;
  align-items: center;
  gap: 8px;
  height: 34px;
  padding: 0 14px 6px 8px;
  position: relative;
}
.tab svg { width: 16px; height: 16px; flex: none; }
.tab span {
  flex: 1;
  min-width: 0;
  overflow: hidden;
  white-space: nowrap;
  text-align: left;
  mask-image: linear-gradient(to right, #000 60%, transparent);
}
.tab::after {
  content: "";
  position: absolute;
  right: 0;
  top: 6px;
  width: 2px;
  height: 16px;
  background: #3c3c3c;
}
.tab.plain::after, .tab.active::after { content: none; }
.tab.active { background: #383838; border-radius: 10px 10px 0 0; padding-right: 10px; color: #eee; }
.tab.active .tab-x { width: 14px; height: 14px; }
.tab .sound { width: 14px; height: 14px; }
.tab .short { mask-image: none; }
.tab.last { gap: 6px; }
.grey { color: #9299a1; }
.light-grey { color: #b4b4b4; }
.new-tab { flex: none; display: grid; place-items: center; width: 32px; height: 32px; }
.tab-search {
  flex: none;
  display: grid;
  place-items: center;
  width: 28px;
  height: 28px;
  margin-left: 52px;
  border-radius: 9px;
  background: #383838;
}
.toolbar {
  display: flex;
  align-items: center;
  height: 47px;
  padding: 0 4px 1px;
  color: #c7c7c7;
}
.tool { display: grid; place-items: center; width: 36px; height: 36px; }
.tool.off { color: #757575; }
.omnibox {
  flex: 1;
  display: flex;
  align-items: center;
  height: 34px;
  margin: 0 8px;
  padding: 0 8px 0 5px;
  border-radius: 17px;
  background: #262626;
}
.site-info { display: grid; place-items: center; width: 24px; height: 24px; border-radius: 50%; background: #3b3b3b; }
.url { flex: 1; margin-left: 8px; font: 14px/20px Inter, sans-serif; color: #c9c9c9; }
.url b { font-weight: 400; color: #f0f0f0; }
.omni-icon { display: grid; place-items: center; width: 32px; height: 32px; }
.tool-rule { width: 2px; height: 16px; margin: 0 8px; background: #555; }
.profile { width: 20px; height: 20px; border-radius: 50%; background: #74169b; color: #fff; font: 11px/20px Inter, sans-serif; text-align: center; }

/* page */
.page { flex: 1; display: flex; position: relative; background: #e6e8eb; }
.sidebar { width: 269px; background: #fff; box-shadow: 0 0 6px rgba(0, 0, 0, .2); }
.sidebar h2 {
  margin: 0;
  padding: 33px 15px 17px;
  border-bottom: 1px solid #b9bcbe;
  font-size: 22px;
  line-height: 26px;
  font-weight: 400;
  color: #212529;
}
.sidebar nav { padding-top: 14px; }
.sidebar a { display: block; padding: 14px 19px; line-height: 21px; color: #000; text-decoration: none; }
.main { flex: 1; min-width: 0; padding: 0 18px 0 19px; }
.page-head { border-bottom: 1px solid #a5a8aa; padding: 30px 11px 27px; }
.page-head h1 { margin: 0; font-size: 18px; line-height: 26px; font-weight: 400; color: #000; }
.card { margin-top: 14px; padding: 27px 27px 13px; background: #fff; border: 1px solid #d6d9dc; }
.list-tools { display: flex; justify-content: space-between; }
.per-page { display: flex; align-items: center; padding-top: 13px; color: #212529; }
.per-page label { width: 116px; white-space: nowrap; }
.per-page select {
  width: 121px;
  height: 18px;
  padding: 0;
  border: 1px solid #444;
  border-radius: 2px;
  background: #fff;
  font: inherit;
  color: #000;
}
.add { width: 93px; height: 35px; padding-bottom: 2px; border-radius: 5px; background: #0060ff; color: #fff; }
.patients { width: calc(100% - 18px); margin: 41px 9px 0; border-collapse: separate; border-spacing: 0; table-layout: fixed; }
.c-no { width: 101px; }
.c-sex { width: 211px; }
.c-detail { width: 240px; }
.patients th { height: 58px; padding: 0 18px 2px; background: #212529; color: #fff; text-align: left; }
.patients td { height: 44px; padding: 0 7px 1px; border-bottom: 1px solid #dee2e6; color: #000; }
.patients tr:nth-child(even) td { height: 43px; }
.detail { display: block; width: 90px; height: 28px; padding-bottom: 2px; border-radius: 4px; background: #212529; color: #fff; font-size: 13px; }

/* patient dialog */
.backdrop {
  position: absolute;
  inset: 0;
  display: flex;
  align-items: center;
  justify-content: center;
  background: rgba(0, 0, 0, .5);
}
.modal {
  width: 540px;
  padding: 0 18px 18px;
  border-radius: 8px;
  background: #d6d6d6;
  box-shadow: 0 6px 20px rgba(0, 0, 0, .4);
}
.modal-head { display: flex; justify-content: flex-end; height: 51px; padding: 26px 8px 0; }
.close { width: 16px; height: 16px; }
.patient {
  display: flex;
  flex-direction: column;
  align-items: center;
  padding: 27px;
  border-radius: 9px;
  background: #fff;
  box-shadow: 0 4px 10px rgba(0, 0, 0, .12);
}
.avatar { width: 135px; height: 135px; }
.fields { display: grid; gap: 14px; width: 100%; margin: 18px 0 17px; }
.field { display: flex; height: 34px; border: 1px solid #dadfe4; border-radius: 6px; overflow: hidden; }
.field label { display: grid; place-items: center; width: 41px; background: #f8f9fa; border-right: 1px solid #dadfe4; }
.field input { flex: 1; min-width: 0; padding: 0 10px 2px; border: 0; background: #fff; color: #212529; font: inherit; }
.actions { display: flex; gap: 7px; }
.act { display: grid; place-items: center; width: 37px; height: 35px; border-radius: 5px; }
.save { background: #007d4c; }
.cancel { background: #606a72; }
.delete { background: #dc2f45; }

/* dock */
.desktop {
  display: flex;
  justify-content: center;
  align-items: flex-start;
  height: 60px;
  padding-top: 1px;
  background: linear-gradient(to right, #030301, #0c0a03 10%, #050502 30%, #050301 50%, #3a2a08 69%, #050502 70%, #040401);
}
.dock {
  display: flex;
  align-items: center;
  gap: 10px;
  height: 54px;
  padding: 0 7px 3px;
  border: 1px solid #3a3934;
  border-radius: 15px;
  background: #171510;
  box-shadow: 0 0 40px rgba(0, 0, 0, .45);
}
.app { width: 35px; height: 35px; position: relative; }
.app > svg { width: 100%; height: 100%; }
.running::after {
  content: "";
  position: absolute;
  left: 15px;
  bottom: -9px;
  width: 4px;
  height: 4px;
  border-radius: 50%;
  background: #97958f;
}
.dock-rule { width: 1px; height: 40px; margin: 0 5px 0 4px; background: #4a4842; }
```
